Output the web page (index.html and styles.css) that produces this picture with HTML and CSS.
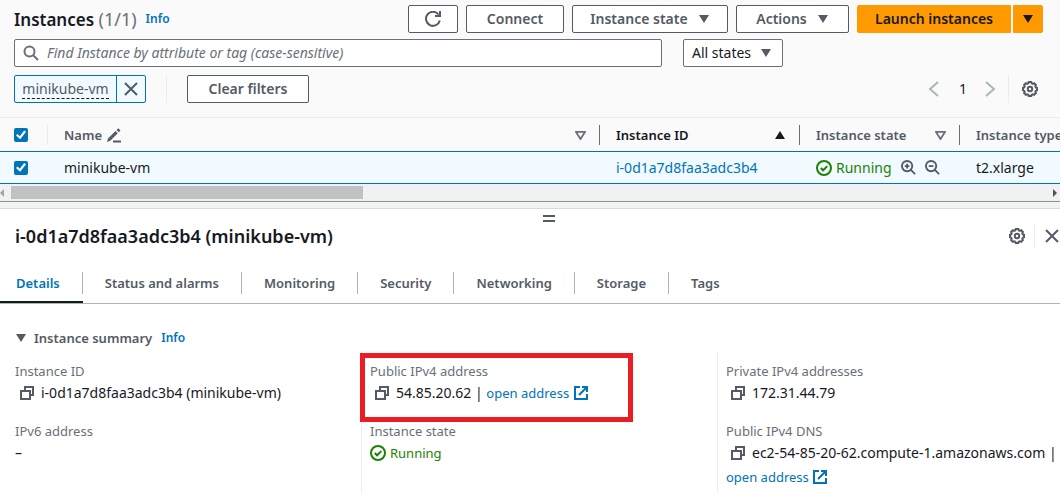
FILE: index.html
```
<!DOCTYPE html>
<html lang="en">
<head>
<meta charset="utf-8">
<title>Instances</title>
<link rel="stylesheet" href="styles.css">
</head>
<body>
<svg class="sprite" aria-hidden="true">
  <symbol id="gear" viewBox="0 0 16 16"><path d="M6.700 1h2.600l.4 1.300 1.200.5 1.200-.6 1.800 1.800-.6 1.200.5 1.200 1.200.4v2.500l-1.200.4-.5 1.200.6 1.200-1.800 1.800-1.200-.6-1.200.5L9.300 15H6.700l-.4-1.200-1.200-.5-1.200.6L2.100 12.100l.6-1.200-.5-1.200L1 9.300V6.800l1.200-.4.5-1.200L2.100 4l1.800-1.800 1.200.6 1.200-.5z"/><circle cx="8" cy="8" r="2.200"/></symbol>
  <symbol id="close" viewBox="0 0 16 16"><path d="M2 2l12 12M14 2L2 14"/></symbol>
  <symbol id="copy" viewBox="0 0 16 16"><path d="M2 6h9v8H2z"/><path d="M6 6V2h8v8h-3"/></symbol>
  <symbol id="external" viewBox="0 0 16 16"><path d="M7 2H2v12h12V9M9 2h5v5M14 2L6 10"/></symbol>
  <symbol id="ok" viewBox="0 0 16 16"><circle cx="8" cy="8" r="7"/><path d="M4.800 8l2.300 2.300 4.200-4.200"/></symbol>
  <symbol id="down" viewBox="0 0 12 10"><path d="M1 1h10L6 9z"/></symbol>
</svg>

<section class="instances">
  <header class="toolbar">
    <h1 class="heading">Instances <span class="count">(1/1)</span></h1>
    <a class="info" href="#">Info</a>
    <div class="actions">
      <button class="btn btn-icon" aria-label="Refresh"><svg class="icon" viewBox="0 0 16 16"><path d="M14.800 9.500A7 7 0 1 1 13.500 3.500M15 0v5h-5"/></svg></button>
      <button class="btn btn-connect">Connect</button>
      <button class="btn btn-state">Instance state <svg class="caret"><use href="#down"/></svg></button>
      <button class="btn btn-actions">Actions <svg class="caret"><use href="#down"/></svg></button>
      <div class="split">
        <button class="btn primary launch">Launch instances</button>
        <button class="btn primary more" aria-label="More launch options"><svg class="caret"><use href="#down"/></svg></button>
      </div>
    </div>
  </header>

  <div class="filters">
    <label class="search">
      <svg class="icon" viewBox="0 0 16 16"><circle cx="6.500" cy="6.500" r="5"/><path d="M10 10l5 5"/></svg>
      <input type="search" aria-label="Find Instance" placeholder="Find Instance by attribute or tag (case-sensitive)">
    </label>
    <div class="select">
      <select aria-label="State filter"><option>All states</option></select>
      <svg class="caret"><use href="#down"/></svg>
    </div>
  </div>

  <div class="tokens">
    <div class="token">
      <button class="token-name"><span>minikube-vm</span></button>
      <button class="token-close" aria-label="Remove filter"><svg class="icon"><use href="#close"/></svg></button>
    </div>
    <span class="rule"></span>
    <button class="btn clear">Clear filters</button>
    <nav class="pager" aria-label="Pages">
      <button class="plain muted" aria-label="Previous page"><svg class="icon" viewBox="0 0 16 16"><path d="M12 1L4 8l8 7"/></svg></button>
      <span class="page">1</span>
      <button class="plain muted" aria-label="Next page"><svg class="icon" viewBox="0 0 16 16"><path d="M4 1l8 7-8 7"/></svg></button>
      <span class="rule"></span>
      <button class="plain" aria-label="Preferences"><svg class="icon"><use href="#gear"/></svg></button>
    </nav>
  </div>

  <table class="table">
    <colgroup><col class="c-check"><col><col class="c-id"><col class="c-state"><col class="c-type"></colgroup>
    <thead>
      <tr>
        <th><div class="th light"><input type="checkbox" aria-label="Select all" checked></div></th>
        <th><div class="th"><span>Name</span><svg class="icon pencil" viewBox="0 0 16 16"><path class="fill" d="M1 15l1-3.500L9.500 4l2.200 2.200L4.300 13.800z"/><path class="fill" d="M10.500 3l1.800-1.800 2.200 2.200-1.800 1.800z"/><path d="M7 14.500h8" stroke-width="2"/></svg><svg class="caret hollow"><use href="#down"/></svg></div></th>
        <th><div class="th sorted"><span>Instance ID</span><svg class="caret up"><use href="#down"/></svg></div></th>
        <th><div class="th"><span>Instance state</span><svg class="caret hollow"><use href="#down"/></svg></div></th>
        <th><div class="th last"><span>Instance type</span></div></th>
      </tr>
    </thead>
    <tbody>
      <tr>
        <td><div class="td"><input type="checkbox" aria-label="Select minikube-vm" checked></div></td>
        <td><div class="td">minikube-vm</div></td>
        <td><div class="td"><a href="#">i-0d1a7d8faa3adc3b4</a></div></td>
        <td><div class="td state">
          <span class="status"><svg class="icon"><use href="#ok"/></svg>Running</span>
          <span class="zooms">
            <button class="plain" aria-label="Include state"><svg class="icon" viewBox="0 0 16 16"><circle cx="6.500" cy="6.500" r="5.500"/><path d="M10.500 10.500L15 15M4 6.500h5M6.500 4v5"/></svg></button>
            <button class="plain" aria-label="Exclude state"><svg class="icon" viewBox="0 0 16 16"><circle cx="6.500" cy="6.500" r="5.500"/><path d="M10.500 10.500L15 15M4 6.500h5"/></svg></button>
          </span>
        </div></td>
        <td><div class="td">t2.xlarge</div></td>
      </tr>
    </tbody>
  </table>
  <div class="scrollbar"><span class="arrow left"></span><div class="track"><div class="thumb"></div></div><span class="arrow right"></span></div>
</section>

<section class="panel">
  <div class="handle"></div>
  <header class="panel-head">
    <h2 class="panel-title">i-0d1a7d8faa3adc3b4 (minikube-vm)</h2>
    <button class="plain" aria-label="Panel preferences"><svg class="icon"><use href="#gear"/></svg></button>
    <span class="rule"></span>
    <button class="plain" aria-label="Close panel"><svg class="icon"><use href="#close"/></svg></button>
  </header>
  <nav class="tabs">
    <a class="tab active" href="#"><span>Details</span></a>
    <a class="tab" href="#"><span>Status and alarms</span></a>
    <a class="tab" href="#"><span>Monitoring</span></a>
    <a class="tab" href="#"><span>Security</span></a>
    <a class="tab" href="#"><span>Networking</span></a>
    <a class="tab" href="#"><span>Storage</span></a>
    <a class="tab" href="#"><span>Tags</span></a>
  </nav>
  <div class="summary-head">
    <button class="summary-toggle"><svg class="caret"><use href="#down"/></svg>Instance summary</button>
    <a class="info" href="#">Info</a>
  </div>
  <div class="summary">
    <dl class="col">
      <div class="field"><dt>Instance ID</dt><dd><button class="plain copy" aria-label="Copy"><svg class="icon"><use href="#copy"/></svg></button>i-0d1a7d8faa3adc3b4 (minikube-vm)</dd></div>
      <div class="field"><dt>IPv6 address</dt><dd>–</dd></div>
    </dl>
    <dl class="col">
      <div class="field marked"><dt>Public IPv4 address</dt><dd><button class="plain copy" aria-label="Copy"><svg class="icon"><use href="#copy"/></svg></button>54.85.20.62 | <a href="#">open address <svg class="icon ext"><use href="#external"/></svg></a></dd></div>
      <div class="field"><dt>Instance state</dt><dd><span class="status"><svg class="icon"><use href="#ok"/></svg>Running</span></dd></div>
    </dl>
    <dl class="col">
      <div class="field"><dt>Private IPv4 addresses</dt><dd><button class="plain copy" aria-label="Copy"><svg class="icon"><use href="#copy"/></svg></button>172.31.44.79</dd></div>
      <div class="field"><dt>Public IPv4 DNS</dt><dd><button class="plain copy" aria-label="Copy"><svg class="icon"><use href="#copy"/></svg></button>ec2-54-85-20-62.compute-1.amazonaws.com | <a class="next-line" href="#">open address <svg class="icon ext"><use href="#external"/></svg></a></dd></div>
    </dl>
  </div>
</section>
</body>
</html>
```
FILE: styles.css
```
*, ::before, ::after { box-sizing: border-box; }
body {
  margin: 0;
  height: 100vh;
  overflow: hidden;
  background: #fff;
  color: #16191f;
  font: 14px/22px "Noto Sans", "Open Sans", sans-serif;
}
button, input, select { font: inherit; color: inherit; margin: 0; }
button { cursor: pointer; }
h1, h2, dl, dd { margin: 0; }
a { color: #0073bb; text-decoration: none; }
.sprite { position: absolute; width: 0; height: 0; }
.icon {
  display: block;
  flex: none;
  width: 16px;
  height: 16px;
  fill: none;
  stroke: currentColor;
  stroke-width: 2;
}
.caret { display: block; flex: none; width: 12px; height: 10px; fill: currentColor; }
.caret.up { transform: rotate(180deg); }
.caret.hollow { fill: none; stroke: #687078; stroke-width: 2; }
.plain { display: flex; padding: 0; border: 0; background: none; color: #545b64; }
.muted { color: #aab7b8; }
.rule { width: 1px; height: 28px; background: #eaeded; }
.info { font-size: 12px; font-weight: 600; }

.instances { background: #fafafa; }
.toolbar { display: flex; align-items: center; padding: 5px 17px 0 14px; }
.heading { font-size: 17px; font-weight: 600; }
.count { color: #687078; font-size: 18px; font-weight: 400; }
.toolbar .info { margin-left: 9px; }
.actions { display: flex; gap: 8px; margin-left: auto; }
.btn {
  display: flex;
  align-items: center;
  justify-content: center;
  gap: 10px;
  height: 28px;
  padding: 0;
  border: 1px solid #545b64;
  border-radius: 2px;
  background: #fff;
  color: #545b64;
  font-weight: 600;
  white-space: nowrap;
}
.btn-icon { width: 50px; }
.btn-connect { width: 98px; }
.btn-state { width: 156px; }
.btn-actions { width: 113px; }
.split { display: flex; gap: 2px; }
.primary { border-color: #ff9900; background: #ff9900; color: #16191f; }
.launch { width: 154px; border-radius: 2px 0 0 2px; }
.more { width: 30px; border-radius: 0 2px 2px 0; }

.filters { display: flex; gap: 21px; padding: 6px 14px 0; }
.search {
  display: flex;
  align-items: center;
  gap: 8px;
  flex: 0 1 648px;
  height: 28px;
  padding: 0 8px;
  border: 1px solid #687078;
  border-radius: 2px;
  background: #fff;
  color: #687078;
}
.search input { flex: 1; min-width: 0; padding: 0; border: 0; outline: 0; background: none; }
.search input::placeholder { color: #687078; font-style: italic; opacity: 1; }
.select { position: relative; width: 100px; }
.select select {
  appearance: none;
  width: 100%;
  height: 28px;
  padding: 0 8px;
  border: 1px solid #687078;
  border-radius: 2px;
  background: #fff;
}
.select .caret { position: absolute; right: 11px; top: 9px; color: #545b64; pointer-events: none; }

.tokens { display: flex; align-items: center; padding: 8px 22px 14px 14px; }
.token { display: flex; height: 28px; border: 1px solid #0073bb; border-radius: 2px; background: #f1faff; }
.token button { border: 0; background: none; color: #545b64; }
.token .token-name { width: 101px; padding: 0; }
.token-name span { display: inline-block; line-height: 18px; border-bottom: 1px dashed #16191f; }
.token .token-close { width: 29px; padding: 0 6px; border-left: 1px solid #0073bb; }
.tokens > .rule { margin: 0 20px; }
.clear { width: 122px; }
.pager { display: flex; align-items: center; margin-left: auto; }
.page { margin: 0 15px 0 17px; }
.pager .rule { margin: 0 13px 0 10px; }

.table { width: 100%; table-layout: fixed; border-collapse: separate; border-spacing: 0; border-top: 1px solid #eaeded; }
.c-check { width: 48px; }
.c-id { width: 200px; }
.c-state { width: 160px; }
.c-type { width: 100px; }
.table th, .table td { padding: 0; overflow: hidden; white-space: nowrap; text-align: left; }
.th {
  display: flex;
  align-items: center;
  height: 20px;
  margin: 7px 0 6px;
  padding: 0 13px 0 16px;
  border-right: 1px solid #687078;
  color: #545b64;
  font-size: 13px;
  font-weight: 600;
}
.th.light { padding-left: 14px; border-color: #eaeded; }
.th.last { border: 0; }
.th.sorted { color: #16191f; }
.th .caret { margin-left: auto; }
.th .caret.hollow { width: 11px; height: 9px; }
.th .pencil { margin-left: 4px; }
.pencil .fill { fill: currentColor; stroke: none; }
.table td { border: solid #0073bb; border-width: 1px 0; background: #f1faff; }
.td { display: flex; align-items: center; height: 31px; padding: 0 12px 0 16px; }
.td.state { padding-right: 20px; }
td:first-child .td { padding-left: 14px; }
.table input {
  appearance: none;
  width: 14px;
  height: 14px;
  border-radius: 2px;
  background: #0073bb;
}
.table input:checked::before {
  content: "";
  display: block;
  width: 10px;
  height: 10px;
  margin: 2px;
  background: #fff;
  clip-path: polygon(0 55%, 15% 40%, 38% 62%, 82% 5%, 100% 18%, 42% 92%);
}
.status { display: inline-flex; align-items: center; gap: 4px; color: #1d8102; }
.zooms { display: flex; gap: 9px; margin-left: auto; }
.zooms .icon { width: 15px; height: 15px; }
.scrollbar {
  display: flex;
  align-items: center;
  justify-content: space-between;
  height: 18px;
  border-bottom: 1px solid #879596;
  background: #f1f1f1;
}
.track { flex: 1; margin: 0 7px; }
.thumb { width: 34%; height: 13px; background: #c1c1c1; }
.arrow { border: solid transparent; border-width: 4px 0; }
.arrow.left { border-right: 4px solid #a3a3a3; }
.arrow.right { margin-right: 3px; border-left: 4px solid #505050; }

.panel { margin-top: 6px; border-top: 1px solid #d5dbdb; box-shadow: 0 -6px #f2f3f3; }
.handle { width: 12px; height: 7px; margin: 6px 0 0 calc(50% + 13px); border: solid #545b64; border-width: 2px 0; }
.panel-head { display: flex; align-items: center; padding: 2px 0 2px 15px; }
.panel-title { flex: 1; font-size: 18px; font-weight: 600; }
.panel-head .rule { height: 24px; margin: 0 9px; }
.tabs { display: flex; margin-top: 16px; border-bottom: 1px solid #aab7b8; }
.tab { padding: 6px 0 9px; color: #545b64; font-size: 13px; font-weight: 600; }
.tab span { display: block; padding: 0 22px; border-right: 1px solid #aab7b8; }
.tab:last-child span { border: 0; }
.tab.active { padding-bottom: 7px; border-bottom: 2px solid #16191f; color: #0073bb; }
.tab.active span { padding-left: 16px; }
.summary-head { display: flex; align-items: center; gap: 9px; padding: 23px 15px 0; }
.summary-toggle { display: flex; align-items: center; gap: 7px; padding: 0; border: 0; background: none; color: #545b64; font-size: 13px; font-weight: 600; }
.summary { display: grid; grid-template-columns: 361fr 356fr 343fr; margin-top: 3px; }
.col { min-height: 142px; padding: 8px 0 4px 8px; border-left: 1px solid #eaeded; }
.col:first-child { padding-left: 15px; border: 0; }
.field { position: relative; margin-bottom: 16px; }
.field dt { color: #687078; font-size: 13px; }
.field dd { height: 22px; white-space: nowrap; }
.field dd a, .field .status { font-size: 13px; }
.copy { display: inline-flex; margin: 0 6px 0 4px; vertical-align: -3px; }
.ext { display: inline-block; vertical-align: -3px; }
.next-line { display: block; margin-top: 2px; }
.marked::after {
  content: "";
  position: absolute;
  left: -10px;
  top: -7px;
  width: 273px;
  height: 69px;
  border: 5px solid #ed1c24;
  pointer-events: none;
}
```
